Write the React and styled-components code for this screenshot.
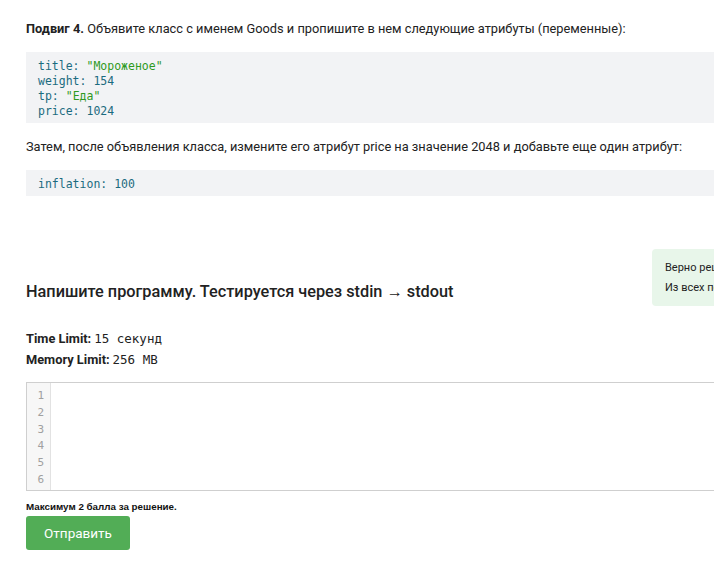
import styled, { createGlobalStyle } from 'styled-components';

const GlobalStyle = createGlobalStyle`
  html, body {
    margin: 0;
    padding: 0;
    background: #fff;
    overflow: hidden;
  }
  body {
    font-family: Roboto, "Liberation Sans", sans-serif;
    color: #222;
  }
`;

const Page = styled.div`
  width: 826px;
  padding: 20px 0 0 26px;
`;

const Text = styled.p`
  margin: ${props => props.$mt || 0}px 0 0;
  font-size: 12.8px;
  line-height: 18px;
  color: #222;
  b {
    font-weight: 700;
  }
`;

const CodeBlock = styled.pre`
  margin: ${props => props.$mt || 0}px 0 0;
  padding: 7px 12px 4px;
  background: #f2f3f5;
  font-family: "DejaVu Sans Mono", "Liberation Mono", monospace;
  font-size: 11.5px;
  line-height: 15px;
  color: #1b6b7f;
`;

const Str = styled.span`
  color: #2f9a1e;
`;

const TaskHead = styled.div`
  display: flex;
  justify-content: space-between;
  align-items: flex-start;
  margin-top: 53px;
`;

const Heading = styled.h2`
  margin: 32px 0 0;
  font-size: 16.3px;
  font-weight: 500;
  line-height: 22px;
  color: #222;
`;

const Notice = styled.div`
  width: 200px;
  box-sizing: border-box;
  padding: 9px 13px 8px;
  background: #e8f6ea;
  border-radius: 4px;
  font-size: 11px;
  line-height: 20px;
  white-space: nowrap;
  overflow: hidden;
  color: #222;
`;

const Limits = styled.div`
  margin-top: 24px;
  display: flex;
  flex-direction: column;
  gap: 3px;
`;

const LimitRow = styled.div`
  font-size: 12.8px;
  line-height: 18px;
  color: #222;
  b {
    font-weight: 700;
  }
  code {
    font-family: "DejaVu Sans Mono", "Liberation Mono", monospace;
    font-size: 12.5px;
    margin-left: 3px;
  }
`;

const Editor = styled.div`
  margin-top: 13px;
  display: flex;
  height: 107px;
  border: 1px solid #cfcfcf;
  background: #fff;
`;

const Gutter = styled.div`
  width: 24px;
  padding: 5px 6px 0 0;
  box-sizing: border-box;
  background: #f7f7f7;
  border-right: 1px solid #e2e2e2;
  text-align: right;
  font-family: "DejaVu Sans Mono", monospace;
  font-size: 11px;
  line-height: 16.8px;
  color: #a0a0a0;
`;

const Note = styled.div`
  margin-top: 10px;
  font-family: "Liberation Sans", Arial, sans-serif;
  font-size: 9.8px;
  font-weight: 700;
  color: #111;
`;

const SubmitButton = styled.button`
  margin-top: 4px;
  width: 104px;
  height: 34px;
  border: none;
  border-radius: 3px;
  background: #52ad56;
  color: #fff;
  font-family: Roboto, sans-serif;
  font-size: 13.5px;
  cursor: pointer;
`;

function App() {
  return (
    <>
      <GlobalStyle />
      <Page>
        <Text>
          <b>Подвиг 4.</b> Объявите класс с именем Goods и пропишите в нем
          следующие атрибуты (переменные):
        </Text>
        <CodeBlock $mt={14}>
          title: <Str>"Мороженое"</Str>
          {'\n'}weight: 154
          {'\n'}tp: <Str>"Еда"</Str>
          {'\n'}price: 1024
        </CodeBlock>
        <Text $mt={15}>
          Затем, после объявления класса, измените его атрибут price на
          значение 2048 и добавьте еще один атрибут:
        </Text>
        <CodeBlock $mt={14}>inflation: 100</CodeBlock>
        <TaskHead>
          <Heading>Напишите программу. Тестируется через stdin → stdout</Heading>
          <Notice>
            Верно решили 1234 учащихся
            <br />
            Из всех попыток 56% верных
          </Notice>
        </TaskHead>
        <Limits>
          <LimitRow>
            <b>Time Limit:</b>
            <code>15 секунд</code>
          </LimitRow>
          <LimitRow>
            <b>Memory Limit:</b>
            <code>256 MB</code>
          </LimitRow>
        </Limits>
        <Editor>
          <Gutter>
            {[1, 2, 3, 4, 5, 6].map(n => (
              <div key={n}>{n}</div>
            ))}
          </Gutter>
        </Editor>
        <Note>Максимум 2 балла за решение.</Note>
        <SubmitButton>Отправить</SubmitButton>
      </Page>
    </>
  );
}

export default App;
